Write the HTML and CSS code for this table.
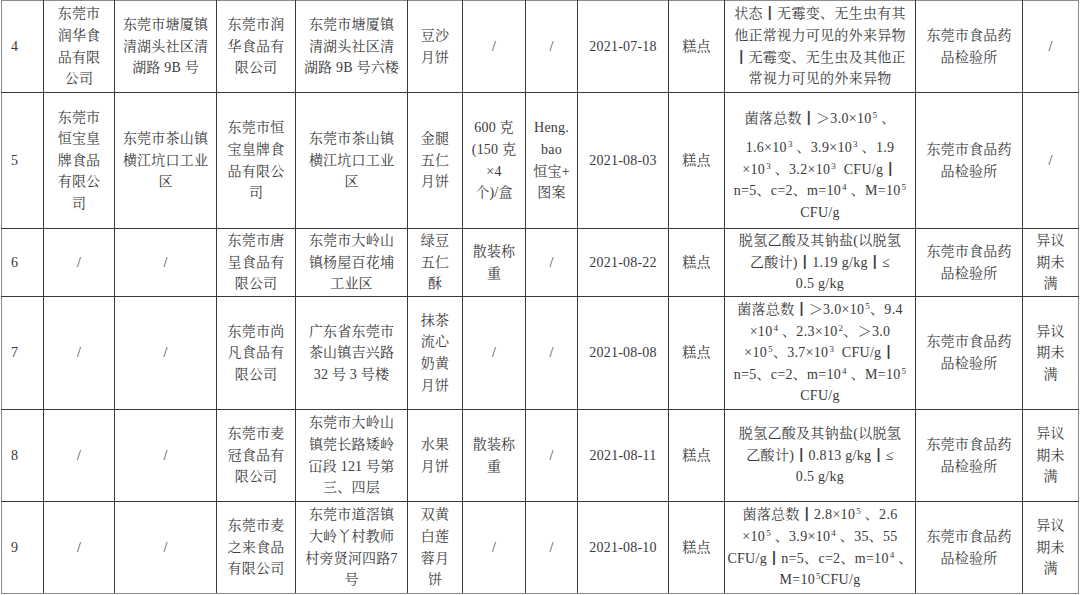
FILE: index.html
```html
<!DOCTYPE html>
<html lang="zh-CN">
<head>
<meta charset="utf-8">
<title>抽检结果</title>
<link rel="stylesheet" href="styles.css">
</head>
<body>
<table class="grid">
  <colgroup>
    <col class="c-num"><col class="c-mname"><col class="c-maddr"><col class="c-sname"><col class="c-saddr">
    <col class="c-food"><col class="c-spec"><col class="c-mark"><col class="c-date"><col class="c-cat">
    <col class="c-res"><col class="c-org"><col class="c-rem">
  </colgroup>
  <tbody>
    <tr class="r4">
      <td class="num">4</td>
      <td>东莞市<br>润华食<br>品有限<br>公司</td>
      <td>东莞市塘厦镇<br>清湖头社区清<br>湖路 9B 号</td>
      <td>东莞市润<br>华食品有<br>限公司</td>
      <td>东莞市塘厦镇<br>清湖头社区清<br>湖路 9B 号六楼</td>
      <td>豆沙<br>月饼</td>
      <td>/</td>
      <td>/</td>
      <td>2021-07-18</td>
      <td>糕点</td>
      <td class="res">状态<span class="bar">┃</span>无霉变、无生虫有其<br>他正常视力可见的外来异物<br><span class="bar">┃</span>无霉变、无生虫及其他正<br>常视力可见的外来异物</td>
      <td>东莞市食品药<br>品检验所</td>
      <td class="last">/</td>
    </tr>
    <tr class="r5">
      <td class="num">5</td>
      <td>东莞市<br>恒宝皇<br>牌食品<br>有限公<br>司</td>
      <td>东莞市茶山镇<br>横江坑口工业<br>区</td>
      <td>东莞市恒<br>宝皇牌食<br>品有限公<br>司</td>
      <td>东莞市茶山镇<br>横江坑口工业<br>区</td>
      <td>金腿<br>五仁<br>月饼</td>
      <td>600 克<br>(150 克<br>×4<br>个)/盒</td>
      <td>Heng.<br>bao<br>恒宝+<br>图案</td>
      <td>2021-08-03</td>
      <td>糕点</td>
      <td class="res res-lead"><span class="lead">菌落总数<span class="bar">┃</span>＞3.0×10<sup>5</sup> 、</span>1.6×10<sup>3</sup> 、3.9×10<sup>3</sup> 、1.9<br>×10<sup>3</sup> 、3.2×10<sup>3</sup>&nbsp; CFU/g<span class="bar">┃</span><br>n=5、c=2、m=10<sup>4</sup> 、M=10<sup>5</sup><br>CFU/g</td>
      <td>东莞市食品药<br>品检验所</td>
      <td class="last">/</td>
    </tr>
    <tr class="r6">
      <td class="num">6</td>
      <td>/</td>
      <td>/</td>
      <td>东莞市唐<br>呈食品有<br>限公司</td>
      <td>东莞市大岭山<br>镇杨屋百花埔<br>工业区</td>
      <td>绿豆<br>五仁<br>酥</td>
      <td>散装称<br>重</td>
      <td>/</td>
      <td>2021-08-22</td>
      <td>糕点</td>
      <td class="res">脱氢乙酸及其钠盐(以脱氢<br>乙酸计)<span class="bar">┃</span>1.19 g/kg<span class="bar">┃</span>≤<br>0.5 g/kg</td>
      <td>东莞市食品药<br>品检验所</td>
      <td class="last">异议<br>期未<br>满</td>
    </tr>
    <tr class="r7">
      <td class="num">7</td>
      <td>/</td>
      <td>/</td>
      <td>东莞市尚<br>凡食品有<br>限公司</td>
      <td>广东省东莞市<br>茶山镇吉兴路<br>32 号 3 号楼</td>
      <td>抹茶<br>流心<br>奶黄<br>月饼</td>
      <td>/</td>
      <td>/</td>
      <td>2021-08-08</td>
      <td>糕点</td>
      <td class="res">菌落总数<span class="bar">┃</span>＞3.0×10<sup>5</sup>、9.4<br>×10<sup>4</sup> 、2.3×10<sup>2</sup>、＞3.0<br>×10<sup>5</sup>、3.7×10<sup>3</sup>&nbsp; CFU/g<span class="bar">┃</span><br>n=5、c=2、m=10<sup>4</sup> 、M=10<sup>5</sup><br>CFU/g</td>
      <td>东莞市食品药<br>品检验所</td>
      <td class="last">异议<br>期未<br>满</td>
    </tr>
    <tr class="r8">
      <td class="num">8</td>
      <td>/</td>
      <td>/</td>
      <td>东莞市麦<br>冠食品有<br>限公司</td>
      <td>东莞市大岭山<br>镇莞长路矮岭<br>冚段 121 号第<br>三、四层</td>
      <td>水果<br>月饼</td>
      <td>散装称<br>重</td>
      <td>/</td>
      <td>2021-08-11</td>
      <td>糕点</td>
      <td class="res">脱氢乙酸及其钠盐(以脱氢<br>乙酸计)<span class="bar">┃</span>0.813 g/kg<span class="bar">┃</span>≤<br>0.5 g/kg</td>
      <td>东莞市食品药<br>品检验所</td>
      <td class="last">异议<br>期未<br>满</td>
    </tr>
    <tr class="r9">
      <td class="num">9</td>
      <td>/</td>
      <td>/</td>
      <td>东莞市麦<br>之来食品<br>有限公司</td>
      <td>东莞市道滘镇<br>大岭丫村教师<br>村旁贤河四路7<br>号</td>
      <td>双黄<br>白莲<br>蓉月<br>饼</td>
      <td>/</td>
      <td>/</td>
      <td>2021-08-10</td>
      <td>糕点</td>
      <td class="res">菌落总数<span class="bar">┃</span>2.8×10<sup>5</sup> 、2.6<br>×10<sup>5</sup> 、3.9×10<sup>4</sup> 、35、55<br>CFU/g<span class="bar">┃</span>n=5、c=2、m=10<sup>4</sup> 、<br>M=10<sup>5</sup>CFU/g</td>
      <td>东莞市食品药<br>品检验所</td>
      <td class="last">异议<br>期未<br>满</td>
    </tr>
  </tbody>
</table>
</body>
</html>
```

FILE: styles.css
```css
html, body {
  margin: 0;
  padding: 0;
  background: #ffffff;
}

body {
  font-family: "Liberation Serif", "Noto Serif CJK SC", "Noto Sans CJK SC", serif;
  font-size: 14px;
  color: #3a3a3a;
}

.grid {
  margin: 0 0 0 1px;
  width: 1077px;
  table-layout: fixed;
  border-collapse: collapse;
}

.c-num { width: 42px; }
.c-mname { width: 71px; }
.c-maddr { width: 102px; }
.c-sname { width: 79px; }
.c-saddr { width: 112px; }
.c-food { width: 55px; }
.c-spec { width: 63px; }
.c-mark { width: 52px; }
.c-date { width: 91px; }
.c-cat { width: 56px; }
.c-res { width: 191px; }
.c-org { width: 107px; }
.c-rem { width: 56px; }

.grid td {
  border: 1px solid #3a3a3a;
  padding: 0 2px;
  text-align: center;
  vertical-align: middle;
  line-height: 21.6px;
  letter-spacing: 0.2px;
  overflow: hidden;
  white-space: nowrap;
}

.grid td.num {
  text-align: left;
  padding-left: 9px;
  border-left-color: #8c8c8c;
}

.grid td.last {
  border-right-color: #8c8c8c;
}

.grid tr.r4 td {
  border-top-color: #8c8c8c;
}

.grid tr.r9 td {
  border-bottom-color: #8c8c8c;
}

.r4 { height: 92px; }
.r5 { height: 136px; }
.r6 { height: 68px; }
.r7 { height: 113px; }
.r8 { height: 92px; }
.r9 { height: 92px; }

.grid td.res {
  letter-spacing: 0.3px;
}

.grid td.res-lead {
  padding-top: 10px;
}

.lead {
  display: block;
  margin-bottom: 8px;
}

.bar {
  font-family: "Noto Sans CJK SC", sans-serif;
  font-weight: bold;
  line-height: 1;
}

sup {
  font-size: 9px;
  line-height: 0;
  vertical-align: 5px;
  margin-left: 1px;
}
```
